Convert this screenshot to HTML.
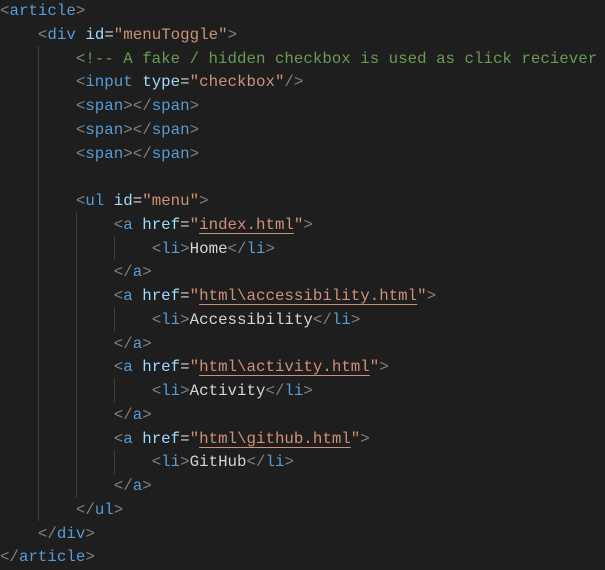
<html><head><style>
body{margin:0;background:#1e1e1e;width:605px;height:570px;overflow:hidden;position:relative;font-family:"Liberation Mono",monospace;font-size:15.8px;}
.l{position:absolute;left:0;height:23.7px;line-height:23.7px;white-space:pre;color:#d4d4d4}
.p{color:#808080}.t{color:#569cd6}.a{color:#9cdcfe}.s{color:#ce9178}.c{color:#6a9955}
.u{text-decoration:underline;text-decoration-color:#ce9178;text-underline-offset:4px}
.g{position:absolute;width:1px;background:#404040}
</style></head><body>
<div class="g" style="left:38px;top:46px;height:475px"></div>
<div class="g" style="left:76px;top:212px;height:286px"></div>
<div class="g" style="left:114px;top:236px;height:24px"></div>
<div class="g" style="left:114px;top:307px;height:24px"></div>
<div class="g" style="left:114px;top:378px;height:24px"></div>
<div class="g" style="left:114px;top:450px;height:24px"></div>
<div class="l" style="top:0px"><span class="p">&lt;</span><span class="t">article</span><span class="p">&gt;</span></div>
<div class="l" style="top:23.75px">    <span class="p">&lt;</span><span class="t">div</span> <span class="a">id</span>=<span class="s">"menuToggle"</span><span class="p">&gt;</span></div>
<div class="l" style="top:47.5px">        <span class="c">&lt;!-- A fake / hidden checkbox is used as click reciever</span></div>
<div class="l" style="top:71.25px">        <span class="p">&lt;</span><span class="t">input</span> <span class="a">type</span>=<span class="s">"checkbox"</span><span class="p">/&gt;</span></div>
<div class="l" style="top:95px">        <span class="p">&lt;</span><span class="t">span</span><span class="p">&gt;&lt;/</span><span class="t">span</span><span class="p">&gt;</span></div>
<div class="l" style="top:118.75px">        <span class="p">&lt;</span><span class="t">span</span><span class="p">&gt;&lt;/</span><span class="t">span</span><span class="p">&gt;</span></div>
<div class="l" style="top:142.5px">        <span class="p">&lt;</span><span class="t">span</span><span class="p">&gt;&lt;/</span><span class="t">span</span><span class="p">&gt;</span></div>
<div class="l" style="top:190px">        <span class="p">&lt;</span><span class="t">ul</span> <span class="a">id</span>=<span class="s">"menu"</span><span class="p">&gt;</span></div>
<div class="l" style="top:213.75px">            <span class="p">&lt;</span><span class="t">a</span> <span class="a">href</span>=<span class="s">"<span class="u">index.html</span>"</span><span class="p">&gt;</span></div>
<div class="l" style="top:237.5px">                <span class="p">&lt;</span><span class="t">li</span><span class="p">&gt;</span>Home<span class="p">&lt;/</span><span class="t">li</span><span class="p">&gt;</span></div>
<div class="l" style="top:261.25px">            <span class="p">&lt;/</span><span class="t">a</span><span class="p">&gt;</span></div>
<div class="l" style="top:285px">            <span class="p">&lt;</span><span class="t">a</span> <span class="a">href</span>=<span class="s">"<span class="u">html\accessibility.html</span>"</span><span class="p">&gt;</span></div>
<div class="l" style="top:308.75px">                <span class="p">&lt;</span><span class="t">li</span><span class="p">&gt;</span>Accessibility<span class="p">&lt;/</span><span class="t">li</span><span class="p">&gt;</span></div>
<div class="l" style="top:332.5px">            <span class="p">&lt;/</span><span class="t">a</span><span class="p">&gt;</span></div>
<div class="l" style="top:356.25px">            <span class="p">&lt;</span><span class="t">a</span> <span class="a">href</span>=<span class="s">"<span class="u">html\activity.html</span>"</span><span class="p">&gt;</span></div>
<div class="l" style="top:380px">                <span class="p">&lt;</span><span class="t">li</span><span class="p">&gt;</span>Activity<span class="p">&lt;/</span><span class="t">li</span><span class="p">&gt;</span></div>
<div class="l" style="top:403.75px">            <span class="p">&lt;/</span><span class="t">a</span><span class="p">&gt;</span></div>
<div class="l" style="top:427.5px">            <span class="p">&lt;</span><span class="t">a</span> <span class="a">href</span>=<span class="s">"<span class="u">html\github.html</span>"</span><span class="p">&gt;</span></div>
<div class="l" style="top:451.25px">                <span class="p">&lt;</span><span class="t">li</span><span class="p">&gt;</span>GitHub<span class="p">&lt;/</span><span class="t">li</span><span class="p">&gt;</span></div>
<div class="l" style="top:475px">            <span class="p">&lt;/</span><span class="t">a</span><span class="p">&gt;</span></div>
<div class="l" style="top:498.75px">        <span class="p">&lt;/</span><span class="t">ul</span><span class="p">&gt;</span></div>
<div class="l" style="top:522.5px">    <span class="p">&lt;/</span><span class="t">div</span><span class="p">&gt;</span></div>
<div class="l" style="top:546.25px"><span class="p">&lt;/</span><span class="t">article</span><span class="p">&gt;</span></div>
</body></html>
